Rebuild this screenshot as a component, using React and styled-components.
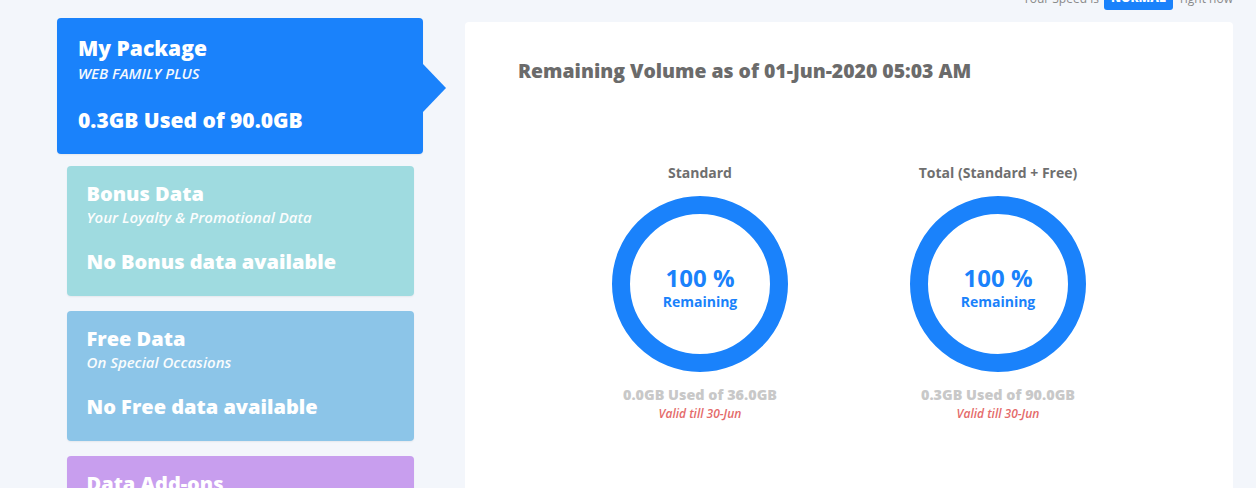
import React from 'react'
import styled, { createGlobalStyle } from 'styled-components'

const GlobalStyle = createGlobalStyle`
  html, body {
    margin: 0;
    padding: 0;
    background: #f3f6fb;
    font-family: "Open Sans", "Noto Sans", sans-serif;
    overflow: hidden;
  }
`

const Page = styled.div`
  padding: 0 23px 0 57px;
`

const SpeedBar = styled.div`
  display: flex;
  justify-content: flex-end;
  align-items: center;
  gap: 5px;
  height: 24px;
  margin-top: -14px;
  font-size: 12px;
  color: #8a8a8a;
`

const SpeedBadge = styled.span`
  background: #1a82fb;
  color: #fff;
  font-weight: 800;
  font-size: 12px;
  line-height: 24px;
  padding: 0 7px;
  margin-right: 2px;
  border-radius: 3px;
`

const Content = styled.div`
  display: grid;
  grid-template-columns: 366px 1fr;
  column-gap: 42px;
  margin-top: 8px;
  align-items: start;
`

const SideColumn = styled.div`
  display: flex;
  flex-direction: column;
  align-items: center;
`

const Card = styled.div`
  position: relative;
  box-sizing: border-box;
  width: ${p => (p.$active ? '366px' : '347px')};
  margin-top: ${p => p.$gap || 0}px;
  padding: ${p => (p.$active ? '17px 21px 21px' : '15px 20px 21px')};
  background: ${p => p.$bg};
  border-radius: 4px;
  color: #fff;
  box-shadow: 0 1px 2px rgba(0, 0, 0, 0.06);

  ${p => p.$active && `
    &::after {
      content: '';
      position: absolute;
      left: 100%;
      top: 46px;
      border-top: 24px solid transparent;
      border-bottom: 24px solid transparent;
      border-left: 23px solid ${p.$bg};
    }
  `}
`

const CardTitle = styled.div`
  font-size: ${p => (p.$active ? 21 : 20)}px;
  font-weight: 800;
  line-height: 26px;
`

const CardSub = styled.div`
  font-size: 15px;
  font-weight: 600;
  font-style: italic;
  line-height: 20px;
  margin-top: ${p => (p.$active ? 2 : 0)}px;
  opacity: 0.95;
`

const CardValue = styled.div`
  font-size: ${p => (p.$active ? 21 : 20)}px;
  font-weight: 800;
  line-height: 26px;
  margin-top: ${p => (p.$active ? 24 : 22)}px;
`

const Panel = styled.div`
  background: #fff;
  border-radius: 4px;
  min-height: 520px;
  margin-top: 4px;
  padding: 36px 53px 0;
`

const PanelTitle = styled.h2`
  margin: 0;
  font-size: 19.4px;
  font-weight: 800;
  line-height: 26px;
  color: #6b6b6b;
`

const Charts = styled.div`
  display: flex;
  justify-content: center;
  gap: 98px;
  margin-top: 79px;
`

const Chart = styled.div`
  width: 200px;
  display: flex;
  flex-direction: column;
  align-items: center;
`

const ChartLabel = styled.div`
  font-size: 14px;
  font-weight: 700;
  line-height: 19px;
  color: #6f6f6f;
`

const Ring = styled.div`
  box-sizing: border-box;
  width: 176px;
  height: 176px;
  margin-top: 14px;
  border: 18px solid #1a82fb;
  border-radius: 50%;
  display: flex;
  flex-direction: column;
  align-items: center;
  justify-content: center;
  padding-top: 6px;
  color: #1a82fb;
  font-weight: 700;
`

const Percent = styled.div`
  font-size: 24px;
  line-height: 28px;
`

const RingCaption = styled.div`
  font-size: 14px;
  line-height: 19px;
`

const Used = styled.div`
  margin-top: 13px;
  font-size: 14.4px;
  font-weight: 800;
  line-height: 19px;
  color: #c8c8c8;
`

const Valid = styled.div`
  margin-top: 2px;
  font-size: 12px;
  font-weight: 600;
  font-style: italic;
  line-height: 15px;
  color: #e46a6a;
`

const cards = [
  { title: 'My Package', sub: 'WEB FAMILY PLUS', value: '0.3GB Used of 90.0GB', bg: '#1a82fb', active: true, gap: 0 },
  { title: 'Bonus Data', sub: 'Your Loyalty & Promotional Data', value: 'No Bonus data available', bg: '#9fdbe0', gap: 12 },
  { title: 'Free Data', sub: 'On Special Occasions', value: 'No Free data available', bg: '#8cc5e8', gap: 15 },
  { title: 'Data Add-ons', sub: 'Extra Volume Purchased', value: 'No Add-ons available', bg: '#c89eee', gap: 15 },
]

const charts = [
  { label: 'Standard', used: '0.0GB Used of 36.0GB' },
  { label: 'Total (Standard + Free)', used: '0.3GB Used of 90.0GB' },
]

export default function App() {
  return (
    <>
      <GlobalStyle />
      <Page>
        <SpeedBar>
          <span>Your Speed is</span>
          <SpeedBadge>NORMAL</SpeedBadge>
          <span>right now</span>
        </SpeedBar>
        <Content>
          <SideColumn>
            {cards.map(c => (
              <Card key={c.title} $bg={c.bg} $active={c.active} $gap={c.gap}>
                <CardTitle $active={c.active}>{c.title}</CardTitle>
                <CardSub $active={c.active}>{c.sub}</CardSub>
                <CardValue $active={c.active}>{c.value}</CardValue>
              </Card>
            ))}
          </SideColumn>
          <Panel>
            <PanelTitle>Remaining Volume as of 01-Jun-2020 05:03 AM</PanelTitle>
            <Charts>
              {charts.map(ch => (
                <Chart key={ch.label}>
                  <ChartLabel>{ch.label}</ChartLabel>
                  <Ring>
                    <Percent>100 %</Percent>
                    <RingCaption>Remaining</RingCaption>
                  </Ring>
                  <Used>{ch.used}</Used>
                  <Valid>Valid till 30-Jun</Valid>
                </Chart>
              ))}
            </Charts>
          </Panel>
        </Content>
      </Page>
    </>
  )
}
